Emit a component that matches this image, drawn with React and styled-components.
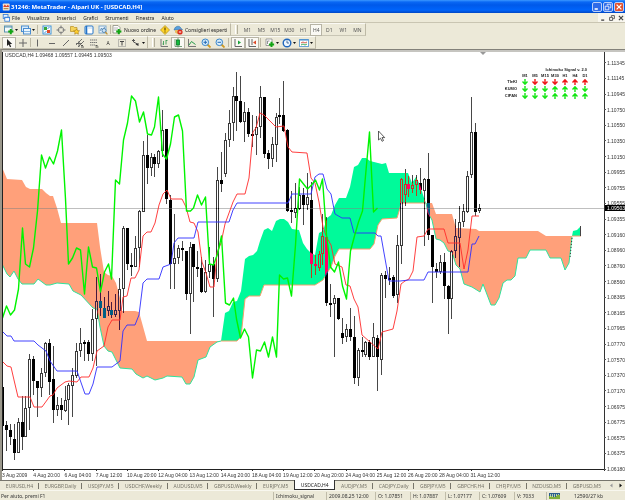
import React from "react";
import styled, { createGlobalStyle, css } from "styled-components";

const GlobalStyle = createGlobalStyle`
  * { box-sizing: border-box; }
  html, body { margin: 0; padding: 0; background: #ece9d8; }
  button, input { font: inherit; color: inherit; }
`;

const Window = styled.div`
  display: flex;
  flex-direction: column;
  min-height: 100vh;
  background: #ece9d8;
  color: #222;
  font: 5px/8px "Noto Sans", "Liberation Sans", sans-serif;
  white-space: nowrap;
  overflow: hidden;
`;

const PlainButton = styled.button`
  display: flex;
  align-items: center;
  justify-content: center;
  margin: 0;
  padding: 0;
  border: 0;
  background: none;
`;

/* Title bar */
const TitleBar = styled.header`
  display: flex;
  align-items: center;
  gap: 1px;
  height: 13px;
  padding: 0 1px 0 2px;
  background: linear-gradient(#3c98ff 0, #0a68f4 2px, #0059ea 5px, #0064fb 10px, #0046c4 13px);
`;
const Title = styled.h1`
  flex: 1;
  margin: 0;
  color: #fff;
  font: bold 6px/12px "Noto Sans", sans-serif;
`;
const CaptionButton = styled(PlainButton)`
  width: 10px;
  height: 10px;
  border: 1px solid #b9cff8;
  border-radius: 2px;
  background: ${(p) => (p.$close ? "#e2502b" : "#2f6be8")};
`;

/* Menu bar */
const MenuBar = styled.nav`
  display: flex;
  align-items: center;
  height: 10px;
  padding-left: 2px;
  border-bottom: 1px solid #c9c5b2;
`;
const MenuItem = styled(PlainButton)`
  margin-left: ${(p) => (p.$first ? 2 : 7)}px;
`;
const ChildButtons = styled.div`
  display: flex;
  justify-content: space-around;
  width: 27px;
  height: 9px;
  margin-left: auto;
  background: #f8f6ee;
`;

/* Toolbars */
const ToolRow = styled.div`
  display: flex;
  height: 13px;
`;
const ToolGroup = styled.div`
  display: flex;
  align-items: center;
  height: 13px;
  padding: 0 1px 0 2px;
  border-top: 1px solid #fbfaf5;
  border-right: 1px solid #bdb9a5;
  border-bottom: 1px solid #c9c6b5;
`;
const Grip = styled.div`
  width: 3px;
  height: 9px;
  margin: 0 2px;
  border-left: 1px solid #fff;
  border-right: 1px solid #b4b09c;
`;
const Divider = styled.div`
  width: 1px;
  height: 9px;
  margin: 0 ${(p) => (p.$wide ? "2px 0 1px" : "0")};
  background: #bcb8a4;
`;
const pressed = css`
  border: 1px solid #b7b4a5;
  background: #faf9f4;
`;
const ToolButton = styled(PlainButton)`
  gap: 1px;
  width: ${(p) => p.$width || 14}px;
  height: 12px;
  ${(p) => p.$pressed && pressed}
`;
const TextToolButton = styled(PlainButton)`
  gap: 2px;
  height: 12px;
  padding: 0 2px 0 1px;
`;
const Frame = styled(ToolButton)`
  color: #555;
`;

/* Chart window */
const ChartWindow = styled.main`
  flex: 1;
  display: grid;
  grid-template-columns: minmax(0, 1fr) 21px;
  grid-template-rows: minmax(0, 1fr) 10px;
  min-height: 300px;
  border-top: 1px solid #83817a;
  border-left: 2px solid #9b988c;
  box-shadow: inset 0 2px #c6c5c0;
  padding-top: 2px;
  background: #fff;
  background-clip: padding-box;
  font-family: "Liberation Sans", sans-serif;
`;
const PlotArea = styled.div`
  position: relative;
  min-width: 0;
  min-height: 0;
  border-left: 1px solid #222;
  border-bottom: 1px solid #222;
`;
const Plot = styled.svg`
  display: block;
  position: absolute;
  width: 100%;
  height: 100%;
`;
const Inverting = styled.g`
  mix-blend-mode: difference;
`;
const Quote = styled.div`
  position: absolute;
  top: 0;
  left: 2px;
  line-height: 7px;
  color: #333;
`;
const PriceScale = styled.ol`
  grid-column: 2;
  grid-row: 1 / 3;
  position: relative;
  display: flex;
  flex-direction: column;
  margin: 0;
  padding: 3px 0;
  list-style: none;
  color: #333;
  background: linear-gradient(#333, #333) 0 0 / 1px calc(100% - 9px) no-repeat;
`;
const Price = styled.li`
  flex: 1;
  display: flex;
  align-items: center;
  gap: 1px;
  &::before {
    content: "";
    width: 2px;
    height: 1px;
    background: #555;
  }
`;
const PriceTag = styled.li`
  position: absolute;
  top: calc(36% - 1px);
  left: 1px;
  right: 0;
  padding-left: 2px;
  height: 6px;
  line-height: 6px;
  color: #fff;
  background: #000;
`;
const TimeScale = styled.ol`
  display: flex;
  width: 83%;
  margin: 0;
  padding: 0;
  list-style: none;
  color: #333;
`;
const Time = styled.li`
  flex: 1 0 0;
  width: 0;
  line-height: 9px;
  &::before {
    content: "";
    display: block;
    width: 1px;
    height: 1px;
    background: #333;
  }
`;
const Signals = styled.table`
  position: absolute;
  top: 15px;
  right: 14px;
  border-collapse: collapse;
  font: bold 4px/6px "Liberation Sans", sans-serif;
  color: #222;
  caption {
    padding-right: 3px;
    text-align: right;
  }
  th, td {
    width: 10px;
    height: 7px;
    padding: 0;
    text-align: center;
    vertical-align: middle;
  }
  thead th, thead td { height: 5px; line-height: 5px; }
  tbody th { width: 17px; padding-right: 3px; text-align: right; }
  svg { display: block; margin: auto; }
`;

/* Bottom bars */
const TabStrip = styled.div`
  display: flex;
  height: 10px;
  border-top: 1px solid #77756c;
  color: #77756a;
`;
const Tab = styled(PlainButton)`
  flex: 1 1 auto;
  position: relative;
  padding: 0 4px;
  ${(p) =>
    p.$active
      ? css`
          margin-top: -1px;
          color: #222;
          background: #fff;
          border: 1px solid #333;
          border-top: 0;
        `
      : css`
          &:not(:last-of-type)::after {
            content: "";
            position: absolute;
            right: 0;
            width: 1px;
            height: 6px;
            background: ${p.$plainEnd ? "none" : "#77756a"};
          }
        `}
`;
const TabArrows = styled.div`
  display: flex;
  align-items: center;
  justify-content: space-around;
  width: 18px;
`;
const StatusBar = styled.footer`
  display: flex;
  align-items: center;
  height: 10px;
  padding-right: 9px;
  border-top: 1px solid #f8f7ef;
  color: #333;
`;
const StatusText = styled.span`
  flex: 1;
  padding-left: 1px;
`;
const StatusCell = styled.span`
  display: flex;
  align-items: center;
  height: 8px;
  width: ${(p) => p.$width}px;
  padding-left: 2px;
  border-left: 1px solid #c0bca9;
`;
const Traffic = styled.span`
  width: 55px;
  text-align: center;
`;

/* Small drawings, all on a 10 x 10 grid */
const Svg = ({ children, size = 10 }) => (
  <svg width={size} height={size} viewBox="0 0 10 10" fill="none" aria-hidden="true">
    {children}
  </svg>
);
const Drop = () => (
  <svg width="3" height="2" viewBox="0 0 3 2" aria-hidden="true">
    <path d="M0 0h3L1.5 2z" fill="#111" />
  </svg>
);
const Plus = ({ x, y }) => (
  <path d={`M${x} ${y - 2.6}v5.2M${x - 2.6} ${y}h5.2`} stroke="#12a512" strokeWidth="2" />
);

const icons = {
  app: (
    <>
      <rect x="1" y="0.5" width="8.5" height="9" rx="1" fill="#f3e4d0" />
      <path d="M1.5 5l2-3 2 2 2-2 1.5 3z" fill="#d8402c" />
      <path d="M2 7h6" stroke="#b08a4a" strokeWidth="1.4" />
    </>
  ),
  windows: (
    <>
      <rect x="1.5" y="0.5" width="6" height="5" fill="#e5f2ff" stroke="#2e79d8" />
      <rect x="3.5" y="4" width="6" height="5" fill="#fff" stroke="#2e79d8" />
      <path d="M3 4.5h7" stroke="#2e79d8" />
    </>
  ),
  newChart: (
    <>
      <rect x="0.5" y="1" width="7.5" height="6" fill="#f4fafd" stroke="#5c93b0" />
      <path d="M1 2h7" stroke="#5c93b0" />
      <Plus x={6.8} y={6.6} />
    </>
  ),
  profiles: (
    <>
      <rect x="0.5" y="1" width="7" height="5.5" fill="#d8ecfc" stroke="#4b8dd0" />
      <rect x="2.5" y="3.5" width="7" height="5.5" fill="#eaf5fd" stroke="#4b8dd0" />
      <path d="M3 6.5h6" stroke="#86b6e2" />
    </>
  ),
  market: (
    <>
      <rect x="1" y="1" width="8" height="8" fill="#fff" stroke="#3e94d8" />
      <path d="M2 2h3v3H2z" fill="#38a838" />
      <path d="M5 5h3v3H5z" fill="#e04a2b" />
      <path d="M5.5 3.5l2-1M2.5 7.5l2-1" stroke="#3e94d8" />
    </>
  ),
  target: (
    <>
      <circle cx="5" cy="5" r="2.8" stroke="#888" />
      <path d="M5 0.5v3M5 6.5v3M0.5 5h3M6.5 5h3" stroke="#777" />
    </>
  ),
  folder: (
    <>
      <path d="M0.5 1.5h3l1 1H7v4H.5z" fill="#f5d35a" stroke="#b98f20" strokeWidth=".7" />
      <path d="M6.5 4l1 1.6 2 .2-1.4 1.4.3 2-1.9-.9-1.8.9.3-2L3.6 5.8l1.9-.2z" fill="#ffcf2e" stroke="#a87a12" strokeWidth=".6" />
    </>
  ),
  terminal: (
    <>
      <rect x="1" y="1" width="8" height="8" rx="1" fill="#fff" stroke="#2474c8" />
      <path d="M2.500 1v8" stroke="#2474c8" strokeWidth="1.600" />
      <path d="M4 3h4" stroke="#b8d6f0" />
    </>
  ),
  tester: (
    <>
      <rect x="1" y="1" width="7" height="7" fill="#e9f3fb" stroke="#7fa9cc" />
      <path d="M2 6l1.500-3 1.500 3 1.500-4" stroke="#5084b4" strokeWidth=".8" />
      <circle cx="6" cy="5.500" r="2" fill="#cfe4f6" stroke="#3f77a8" strokeWidth=".8" />
      <path d="M7.400 7l2 2.300" stroke="#c59230" strokeWidth="1.200" />
    </>
  ),
  order: (
    <>
      <path d="M1 .5h5l2 2V8H1z" fill="#fff" stroke="#8c8c80" strokeWidth=".8" />
      <path d="M2 3h4M2 5h4" stroke="#999" strokeWidth=".7" />
      <Plus x={6.8} y={6.6} />
    </>
  ),
  warning: (
    <>
      <path d="M5 .5L9.500 5 5 9.500.5 5z" fill="#ffd42a" stroke="#b8921a" strokeWidth=".8" />
      <path d="M5 2.500v3M5 6.500v1" stroke="#5c4400" strokeWidth="1.200" />
    </>
  ),
  expert: (
    <>
      <path d="M1.500 4C2 1 7 0 8 3.500l1.500 1L1 5z" fill="#5aa0dc" stroke="#2c6ea8" strokeWidth=".6" />
      <path d="M2 5h5v2.500L4.500 9 2 7.500z" fill="#e8bf62" />
      <circle cx="7" cy="7" r="2.600" fill="#dc2a1c" />
      <path d="M5.800 7h2.400" stroke="#fff" />
    </>
  ),
  cursor: <path d="M3 1v7l1.700-1.500L6 9.300l1.200-.6L6 6h2.200z" fill="#222" />,
  cross: <path d="M5 1v8M1 5h8" stroke="#666" />,
  vline: <path d="M4.500 1.500v7" stroke="#666" />,
  hline: <path d="M2 5.500h6" stroke="#666" />,
  trend: <path d="M2 8l6-6" stroke="#666" />,
  channel: (
    <>
      <path d="M1 7l6-6M3 9l6-6M1 5.500h6M4 9V3" stroke="#555" strokeWidth=".8" />
      <path d="M6 9h3M6 7.500h2" stroke="#333" strokeWidth=".8" />
    </>
  ),
  fibo: (
    <>
      <path d="M1 2h7M1 4.500h7M1 7h5" stroke="#777" strokeDasharray="1.500 .5" />
      <path d="M6.500 9h3M6.500 7.500h2" stroke="#333" strokeWidth=".8" />
    </>
  ),
  label: (
    <>
      <rect x="1.500" y="1.500" width="7" height="7" stroke="#888" strokeDasharray="1 1" />
      <path d="M3 3.500h4M5 3.500v4" stroke="#444" />
    </>
  ),
  arrows: (
    <>
      <path d="M1 2.500h3M2.500 1v3l4 2" stroke="#555" />
      <path d="M4.500 6.500l3 1.500V5z" fill="#333" />
    </>
  ),
  bars: (
    <>
      <path d="M2 1v7.500h7" stroke="#777" />
      <path d="M4.500 3v4M7 2v4.500M3.500 6h1M7 2.500h1.500" stroke="#3c9c56" strokeWidth=".9" />
    </>
  ),
  candles: (
    <>
      <path d="M5 0v9.500M2 1v7.500H9" stroke="#568a5a" strokeWidth=".8" />
      <rect x="3.500" y="2" width="3" height="5" fill="#12bb3c" stroke="#087a24" strokeWidth=".8" />
    </>
  ),
  line: (
    <>
      <path d="M1.500 1v7.500H9" stroke="#777" />
      <path d="M2 7l2.500-3.500L8.500 6.500" stroke="#259a48" />
    </>
  ),
  zoomIn: (
    <>
      <path d="M6 6l3.500 3.500" stroke="#d09a22" strokeWidth="1.800" />
      <circle cx="4.300" cy="4.300" r="3.300" fill="#d8eefc" stroke="#3a86cc" />
      <path d="M2.500 4.300h3.600M4.300 2.500v3.600" stroke="#2468b4" />
    </>
  ),
  zoomOut: (
    <>
      <path d="M6 6l3.500 3.500" stroke="#d09a22" strokeWidth="1.800" />
      <circle cx="4.300" cy="4.300" r="3.300" fill="#d8eefc" stroke="#3a86cc" />
      <path d="M2.500 4.300h3.600" stroke="#2468b4" />
    </>
  ),
  scroll: (
    <>
      <path d="M2 1v7.500h7" stroke="#666" />
      <path d="M5 2.500l3 2L5 6.500z" fill="#19a33a" />
    </>
  ),
  shift: (
    <>
      <path d="M2 1v7.500h7M5 1v6" stroke="#666" />
      <path d="M9 2.500l-3 2 3 2z" fill="#dd4a28" />
    </>
  ),
  indicators: (
    <>
      <path d="M1 1h6v6.500H1z" fill="#fff" stroke="#888" strokeWidth=".8" />
      <path d="M2.500 6V3h2" stroke="#777" strokeWidth=".8" />
      <Plus x={6.5} y={6.4} />
    </>
  ),
  clock: (
    <>
      <circle cx="5" cy="5" r="3.800" fill="#eef7ff" stroke="#1f66bd" strokeWidth="1.400" />
      <path d="M5 2.500V5h2" stroke="#1f4f8a" strokeWidth=".8" />
    </>
  ),
  template: (
    <>
      <rect x=".5" y="1.500" width="9" height="7" fill="#fff" stroke="#6ba2d4" />
      <path d="M1 2h8" stroke="#3b86cc" />
      <path d="M2 5l2-1 2 1 2-1" stroke="#d04838" strokeWidth=".9" />
      <path d="M2 7l2-1 2 1 2-1" stroke="#2ba04a" strokeWidth=".9" />
    </>
  ),
};

const Tool = ({ name, label, drop, on }) => (
  <ToolButton $width={drop ? 17 : 14} $pressed={on} aria-label={label} aria-pressed={on}>
    <Svg>{icons[name]}</Svg>
    {drop && <Drop />}
  </ToolButton>
);

/* Each bar: [high, body top, body bottom, low, "u" rising | "d" falling] in plot units */
const bars = [
  [387, 387, 426, 442, "d"], [421, 425, 430, 451, "d"], [424, 430, 437, 445, "d"], [424, 439, 453, 460, "d"],
  [418, 422, 453, 453, "u"], [396, 422, 437, 450, "d"], [396, 408, 437, 437, "u"], [354, 359, 408, 430, "u"],
  [356, 359, 381, 395, "d"], [381, 381, 388, 417, "d"], [368, 373, 388, 397, "u"], [342, 343, 373, 377, "u"],
  [339, 343, 382, 395, "d"], [346, 379, 410, 423, "d"], [397, 405, 410, 416, "u"], [398, 405, 410, 420, "d"],
  [386, 400, 411, 412, "u"], [383, 385, 400, 425, "u"], [368, 375, 386, 417, "u"], [343, 351, 376, 378, "u"],
  [328, 343, 351, 357, "u"], [340, 342, 344, 361, "u"], [340, 342, 354, 361, "d"], [309, 319, 354, 361, "u"],
  [277, 301, 319, 366, "u"], [274, 301, 308, 316, "d"], [297, 308, 318, 318, "d"], [291, 306, 311, 316, "u"],
  [302, 310, 315, 318, "d"], [294, 310, 315, 317, "u"], [278, 289, 311, 330, "u"], [226, 228, 289, 313, "u"],
  [228, 228, 264, 270, "d"], [253, 265, 267, 276, "d"], [236, 248, 267, 267, "u"], [210, 211, 248, 267, "u"],
  [141, 155, 212, 212, "u"], [135, 155, 168, 184, "d"], [153, 157, 168, 176, "u"], [154, 157, 164, 177, "d"],
  [150, 151, 164, 168, "u"], [110, 130, 151, 157, "u"], [129, 129, 199, 204, "d"], [195, 200, 264, 289, "d"],
  [214, 258, 264, 289, "u"], [245, 248, 258, 264, "u"], [241, 248, 250, 261, "d"], [251, 251, 294, 300, "d"],
  [242, 247, 294, 334, "u"], [244, 244, 267, 302, "d"], [251, 267, 268, 277, "d"], [257, 268, 292, 293, "d"],
  [260, 272, 292, 293, "u"], [247, 264, 272, 278, "u"], [257, 264, 279, 317, "d"], [167, 180, 279, 282, "u"],
  [152, 180, 184, 192, "d"], [133, 140, 174, 177, "u"], [110, 123, 140, 147, "u"], [87, 96, 123, 141, "u"],
  [72, 96, 101, 131, "d"], [76, 101, 122, 123, "d"], [102, 112, 122, 142, "u"], [108, 112, 134, 137, "d"],
  [115, 134, 135, 147, "d"], [116, 127, 135, 155, "u"], [86, 97, 127, 138, "u"], [97, 97, 154, 158, "d"],
  [150, 153, 159, 169, "d"], [137, 144, 159, 167, "u"], [113, 117, 145, 162, "u"], [98, 115, 116, 124, "u"],
  [81, 115, 131, 132, "d"], [129, 130, 211, 212, "d"], [191, 210, 211, 223, "d"], [183, 208, 213, 218, "u"],
  [187, 195, 209, 210, "u"], [188, 195, 205, 225, "d"], [173, 197, 205, 210, "u"], [182, 200, 264, 278, "d"],
  [255, 264, 265, 275, "d"], [251, 254, 268, 271, "u"], [214, 236, 254, 265, "u"], [217, 237, 303, 306, "d"],
  [284, 303, 305, 317, "d"], [295, 298, 304, 357, "u"], [298, 298, 319, 320, "d"], [318, 333, 338, 344, "d"],
  [324, 329, 337, 342, "u"], [308, 329, 337, 341, "d"], [316, 337, 378, 384, "d"], [348, 350, 378, 386, "u"],
  [337, 350, 351, 357, "d"], [341, 342, 355, 357, "u"], [340, 342, 357, 360, "d"], [323, 337, 357, 357, "u"],
  [335, 338, 357, 391, "d"], [273, 275, 360, 375, "u"], [271, 275, 279, 298, "d"], [267, 278, 279, 285, "u"],
  [275, 277, 296, 298, "d"], [235, 245, 295, 303, "u"], [178, 179, 246, 264, "u"], [169, 184, 195, 206, "u"],
  [176, 184, 189, 197, "d"], [175, 185, 189, 193, "u"], [175, 180, 185, 196, "u"], [168, 183, 190, 194, "d"],
  [178, 179, 191, 246, "u"], [153, 179, 235, 240, "d"], [235, 235, 267, 303, "d"], [263, 269, 272, 278, "d"],
  [255, 262, 272, 274, "u"], [253, 262, 286, 299, "d"], [285, 286, 299, 334, "d"], [250, 251, 299, 319, "u"],
  [219, 236, 251, 258, "u"], [206, 222, 238, 267, "u"], [204, 211, 222, 227, "u"], [171, 176, 212, 213, "u"],
  [97, 132, 175, 178, "u"], [123, 132, 212, 216, "d"], [204, 208, 211, 213, "u"],
];
const barX = (i) => Math.round(2 + i * 3.908) + 0.5;

/* The lagging span is the close of each bar, plotted 26 bars back */
const LAG = 26;
const lagging = bars
  .slice(LAG)
  .map(([, top, bottom, , way], i) => `${barX(i)},${way === "u" ? top : bottom}`)
  .join(" ");

const tenkan =
  "3,362 7,366 11,367 14,380 18,397 30,397 34,407 42,407 50,396 53,395 57,388 65,382 69,381 77,382 81,377 89,377 93,368 97,351 104,346 108,327 112,320 120,320 123,297 127,296 131,278 135,278 139,270 143,236 147,232 151,232 155,223 159,205 163,194 167,190 171,199 182,199 186,207 190,222 194,223 198,232 202,262 206,273 210,287 214,287 217,253 221,243 225,224 233,202 237,194 245,194 249,178 253,132 256,128 260,113 264,115 268,119 272,123 276,127 284,126 288,147 292,152 307,153 311,178 315,183 319,202 323,227 327,238 331,245 335,264 342,267 346,285 350,286 354,299 358,307 362,335 370,342 378,349 382,332 393,329 397,311 401,284 405,281 409,279 413,271 417,237 424,236 428,229 444,229 448,243 460,243 464,269 468,250 472,216 479,216";
const kijun =
  "3,332 7,336 11,336 14,341 34,341 38,345 46,351 50,361 57,371 77,371 85,394 89,394 93,384 97,367 112,367 116,364 120,361 123,331 127,325 135,325 139,315 143,283 147,279 159,279 163,267 171,264 174,243 178,238 194,238 198,222 229,222 233,210 237,203 288,203 292,194 311,194 315,177 319,174 323,174 327,189 331,194 335,214 342,218 350,218 354,233 375,233 378,236 381,236 389,281 400,281 409,280 424,280 428,272 468,272 472,244 475,244 479,236";

/* Cloud stretches: the leading edge and the edge below it */
const clouds = [
  {
    fill: "#ffa07a",
    line: "#2fe39c",
    top: "2,167 7,179 22,180 26,187 30,189 42,189 46,193 50,196 53,196 57,208 61,223 97,223 100,247 104,272 108,275 112,276 116,283 120,298 122,311 135,311 139,312 147,341 222,341",
    edge: "221,341 217,342 210,347 206,357 198,360 194,377 190,384 186,384 182,377 167,376 163,378 155,380 147,376 143,378 136,374 132,369 120,368 112,352 108,351 104,346 100,327 97,309 93,308 81,295 73,291 69,284 57,283 50,285 46,285 38,279 34,284 22,284 18,279 14,271 10,277 7,274 2,264",
  },
  {
    fill: "#00fa9a",
    line: "#f6a06c",
    top: "221,341 225,313 229,311 233,302 237,301 241,291 245,259 249,256 253,255 257,251 260,241 264,230 268,228 272,231 276,221 280,219 284,219 288,222 292,229 299,230 303,243 307,249 311,253 315,255 319,233 323,231 327,218 331,215 335,205 339,198 346,198 350,187 354,167 358,165 362,158 366,158 370,161 382,164 386,163 389,173 408,173 412,183 416,177 420,185 424,198 426,203",
    edge: "426,203 401,203 400,208 397,218 382,219 378,225 374,244 370,249 339,249 335,256 331,267 327,273 323,280 315,285 264,285 260,296 249,296 245,299 241,337 237,341 221,341",
  },
  {
    fill: "#ffa07a",
    line: "#2fe39c",
    top: "425,203 432,203 436,214 452,214 456,228 476,229 479,231 538,231 546,236 572,236",
    edge: "572,237 569,263 565,270 561,258 550,258 546,250 530,250 526,258 518,258 515,276 511,280 507,280 503,283 499,298 495,305 491,305 483,284 480,292 472,287 464,284 460,269 456,265 452,252 448,251 444,243 440,240 436,239 432,220 428,213 426,203",
  },
  { fill: "#00fa9a", line: "#f6a06c", top: "572,236 573,231 577,230 581,226", edge: "581,236 572,236" },
];

const Candle = ({ bar: [high, top, bottom, low, way], x }) => (
  <>
    <path d={`M${x} ${high}V${top}M${x} ${bottom}V${low}`} stroke="#b8b8b8" />
    {way === "u" && bottom - top > 2 ? (
      <rect x={x - 1} y={top + 0.5} width="2" height={bottom - top - 1} fill="none" stroke="#c6c6c6" />
    ) : (
      <rect x={x - 1.5} y={top} width="3" height={Math.max(2, bottom - top)} fill="#fff" />
    )}
  </>
);

const Chart = () => (
  <Plot viewBox="3 52 601 417" preserveAspectRatio="none" role="img" aria-label="USDCAD, H4">
    <rect x="3" y="52" width="601" height="418" fill="#fff" />
    {clouds.map((c) => (
      <g key={c.top}>
        <polygon points={`${c.top} ${c.edge}`} fill={c.fill} />
        <polyline points={c.edge} fill="none" stroke={c.line} />
      </g>
    ))}
    <path d="M580.500 226v10" stroke="#444" />
    <path d="M572 238l-2 20" stroke="#333" strokeDasharray="1 2" />
    <path d="M3 208.500h601" stroke="#808080" strokeOpacity=".5" />
    <Inverting>
      {bars.map((bar, i) => (
        <Candle key={i} bar={bar} x={barX(i)} />
      ))}
    </Inverting>
    <g fill="none" strokeLinejoin="round">
      <polyline points={tenkan} stroke="#ff2a2a" strokeWidth=".9" />
      <polyline points={kijun} stroke="#2e2eff" strokeWidth=".9" />
      <polyline points={lagging} stroke="#00f400" strokeWidth="1.400" />
    </g>
    <path d="M480 52h6l-3 3z" fill="#999" />
    <path d="M378.500 131v9l2-1.700 1.600 3 1.400-.8-1.500-2.900h2.700z" fill="#fff" stroke="#333" strokeWidth=".8" />
  </Plot>
);

const Arrow = ({ way, color }) => (
  <svg width="6" height="6" viewBox="0 0 6 6" aria-label={way}>
    <path
      d={way === "up" ? "M3 6V1M.5 3.500L3 .8l2.500 2.700" : "M3 0v5M.5 2.500L3 5.200l2.500-2.700"}
      fill="none"
      stroke={color}
      strokeWidth="1.400"
    />
  </svg>
);

const prices =
  "1.11345 1.11145 1.10945 1.10750 1.10550 1.10350 1.10150 1.09955 1.09755 1.09555 1.09355 1.09160 1.08960 1.08760 1.08560 1.08365 1.08165 1.07965 1.07770 1.07570 1.07370 1.07170 1.06975 1.06775 1.06575 1.06375 1.06180".split(" ");
const times = [
  "3 Aug 2009", "4 Aug 20:00", "6 Aug 04:00", "7 Aug 12:00", "10 Aug 20:00", "12 Aug 04:00", "13 Aug 12:00", "14 Aug 20:00",
  "18 Aug 04:00", "19 Aug 12:00", "20 Aug 20:00", "24 Aug 04:00", "25 Aug 12:00", "26 Aug 20:00", "28 Aug 04:00", "31 Aug 12:00",
];
const signalFrames = ["M1", "M5", "M15", "M30", "H1", "H4", "D1"];
/* g / r: colour, lower case points down, upper case points up */
const signalRows = [
  ["TIeKI", "grrrRRR"],
  ["KUMO", "gggGGGg"],
  ["CIPAN", "gggGGGG"],
];
const tabs =
  "EURUSD,H4 EURGBP,Daily USDJPY,M5 USDCHF,Weekly AUDUSD,M5 GBPUSD,Weekly EURJPY,M5 USDCAD,H4 AUDJPY,M5 CADJPY,Daily GBPJPY,M5 GBPCHF,H4 CHFJPY,M5 NZDUSD,M5 GBPUSD,M5".split(" ");

export default function App() {
  return (
    <Window>
      <GlobalStyle />
      <TitleBar>
        <Svg size={8}>{icons.app}</Svg>
        <Title>31246: MetaTrader - Alpari UK - [USDCAD,H4]</Title>
        <CaptionButton aria-label="Riduci a icona">
          <Svg size={8}><path d="M2 7.500h4" stroke="#fff" strokeWidth="2" /></Svg>
        </CaptionButton>
        <CaptionButton aria-label="Ripristina">
          <Svg size={8}><path d="M4 3V1.500h4.500V6H7M1.500 4H6v4.500H1.500z" stroke="#fff" /></Svg>
        </CaptionButton>
        <CaptionButton $close aria-label="Chiudi">
          <Svg size={8}><path d="M2 2l6 6M8 2L2 8" stroke="#fff" strokeWidth="1.600" /></Svg>
        </CaptionButton>
      </TitleBar>

      <MenuBar>
        <Svg size={8}>{icons.windows}</Svg>
        {["File", "Visualizza", "Inserisci", "Grafici", "Strumenti", "Finestra", "Aiuto"].map((m, i) => (
          <MenuItem key={m} $first={i === 0}>{m}</MenuItem>
        ))}
        <ChildButtons>
          <PlainButton aria-label="Riduci grafico">
            <Svg size={6}><path d="M2 8.500h5" stroke="#333" strokeWidth="2" /></Svg>
          </PlainButton>
          <PlainButton aria-label="Ripristina grafico">
            <Svg size={6}><path d="M4 3V1h5v5H7M1 4h5v5H1z" stroke="#444" strokeWidth="1.400" /></Svg>
          </PlainButton>
          <PlainButton aria-label="Chiudi grafico">
            <Svg size={6}><path d="M1.500 1.500l7 7M8.500 1.500l-7 7" stroke="#444" strokeWidth="2" /></Svg>
          </PlainButton>
        </ChildButtons>
      </MenuBar>

      <ToolRow>
        <ToolGroup>
          <Tool name="newChart" label="Nuovo grafico" drop />
          <Tool name="profiles" label="Profili" drop />
          <Divider $wide />
          <Tool name="market" label="Market" />
          <Tool name="target" label="Dati" />
          <Tool name="folder" label="Navigatore" />
          <Tool name="terminal" label="Terminale" />
          <Tool name="tester" label="Tester" />
          <Divider />
          <TextToolButton><Svg>{icons.order}</Svg>Nuovo ordine</TextToolButton>
          <Tool name="warning" label="Avviso" />
          <TextToolButton><Svg>{icons.expert}</Svg>Consiglieri esperti</TextToolButton>
        </ToolGroup>
        <ToolGroup>
          <Grip />
          {["M1", "M5", "M15", "M30", "H1", "H4", "D1", "W1", "MN"].map((f) => (
            <Frame key={f} $width={f === "H4" ? 12 : 14} $pressed={f === "H4"}>{f}</Frame>
          ))}
        </ToolGroup>
      </ToolRow>

      <ToolRow>
        <ToolGroup>
          <Tool name="cursor" label="Cursore" on />
          <Tool name="cross" label="Mirino" />
          <Divider />
          <Tool name="vline" label="Linea verticale" />
          <Tool name="hline" label="Linea orizzontale" />
          <Tool name="trend" label="Trendline" />
          <Tool name="channel" label="Canale" />
          <Tool name="fibo" label="Fibonacci" />
          <ToolButton>A</ToolButton>
          <Tool name="label" label="Etichetta" />
          <Tool name="arrows" label="Frecce" drop />
        </ToolGroup>
        <ToolGroup>
          <Grip />
          <Tool name="bars" label="Barre" />
          <Tool name="candles" label="Candele" on />
          <Tool name="line" label="Linea" />
          <Tool name="zoomIn" label="Ingrandisci" />
          <Tool name="zoomOut" label="Rimpicciolisci" />
          <Divider $wide />
          <Tool name="scroll" label="Scorrimento" on />
          <Tool name="shift" label="Spostamento" on />
          <Divider $wide />
          <Tool name="indicators" label="Indicatori" drop />
          <Tool name="clock" label="Periodi" drop />
          <Tool name="template" label="Modelli" drop />
        </ToolGroup>
      </ToolRow>

      <ChartWindow>
        <PlotArea>
          <Chart />
          <Quote>USDCAD,H4 1.09468 1.09557 1.09445 1.09503</Quote>
          <Signals>
            <caption>Ichimoku Signal v. 2.0</caption>
            <thead>
              <tr>
                <td />
                {signalFrames.map((f) => <th key={f} scope="col">{f}</th>)}
              </tr>
            </thead>
            <tbody>
              {signalRows.map(([name, marks]) => (
                <tr key={name}>
                  <th scope="row">{name}</th>
                  {[...marks].map((m, i) => (
                    <td key={i}>
                      <Arrow way={m === m.toUpperCase() ? "up" : "down"} color={/g/i.test(m) ? "#12e612" : "#f01414"} />
                    </td>
                  ))}
                </tr>
              ))}
            </tbody>
          </Signals>
        </PlotArea>
        <PriceScale>
          {prices.map((p) => <Price key={p}>{p}</Price>)}
          <PriceTag>1.09503</PriceTag>
        </PriceScale>
        <TimeScale>
          {times.map((t) => <Time key={t}>{t}</Time>)}
        </TimeScale>
      </ChartWindow>

      <TabStrip>
        {tabs.map((t, i) => (
          <Tab key={t} $active={t === "USDCAD,H4"} $plainEnd={i === 6}>{t}</Tab>
        ))}
        <TabArrows>
          <PlainButton aria-label="Schede precedenti">
            <Svg size={5}><path d="M7 1v8L2 5z" fill="#999" /></Svg>
          </PlainButton>
          <PlainButton aria-label="Schede successive">
            <Svg size={5}><path d="M3 1v8l5-4z" fill="#111" /></Svg>
          </PlainButton>
        </TabArrows>
      </TabStrip>

      <StatusBar>
        <StatusText>Per aiuto, premi F1</StatusText>
        <StatusCell $width={53}>Ichimoku_signal</StatusCell>
        <StatusCell $width={49}>2009.08.25 12:00</StatusCell>
        <StatusCell $width={35}>O: 1.07851</StatusCell>
        <StatusCell $width={35}>H: 1.07887</StatusCell>
        <StatusCell $width={34}>L: 1.07177</StatusCell>
        <StatusCell $width={35}>C: 1.07609</StatusCell>
        <StatusCell $width={32}>V: 7033</StatusCell>
        <StatusCell $width={15}>
          <svg width="11" height="6" viewBox="0 0 11 6" aria-hidden="true">
            <rect width="11" height="6" fill="#2c5f8c" />
            <path d="M0 6V3h4v1h3V2h4v4z" fill="#7fae3c" />
            <path d="M1.500 1v3M3.500 1v3M5.500 1v3M7.500 1v2M9.500 1v1" stroke="#d8e8c0" strokeWidth=".8" />
          </svg>
        </StatusCell>
        <Traffic>12590/27 kb</Traffic>
      </StatusBar>
    </Window>
  );
}
